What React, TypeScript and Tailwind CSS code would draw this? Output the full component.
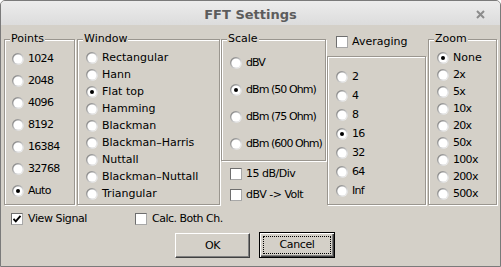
import { useId } from 'react';

const Radio: React.FC<{ checked?: boolean }> = ({ checked }) => {
  const id = useId();
  return (
    <svg width="12" height="12" viewBox="0 0 12 12" className="shrink-0">
      <defs>
        <linearGradient id={id} x1="0" y1="0" x2="1" y2="1">
          <stop offset="0" stopColor="#6f6f6f" />
          <stop offset="0.55" stopColor="#c8c8c8" />
          <stop offset="1" stopColor="#ffffff" />
        </linearGradient>
      </defs>
      <circle cx="6" cy="6" r="6" fill={`url(#${id})`} />
      <circle cx="6" cy="6" r="4.6" fill="#ffffff" />
      {checked && <circle cx="6" cy="6" r="2" fill="#000000" />}
    </svg>
  );
};

const Check: React.FC<{ checked?: boolean }> = ({ checked }) => (
  <span className="w-[12px] h-[12px] shrink-0 bg-white border border-[#6e6e6e] border-r-[#a8a8a8] border-b-[#a8a8a8] flex items-center justify-center">
    {checked && (
      <svg width="10" height="10" viewBox="0 0 10 10">
        <path d="M1.5 4.8 L3.8 7.3 L8.5 1.8" fill="none" stroke="#000" strokeWidth="1.9" />
      </svg>
    )}
  </span>
);

const Group: React.FC<{ label?: string; className: string; children: React.ReactNode }> = ({ label, className, children }) => (
  <div className={`relative border border-[#9a968f] shadow-[inset_1px_1px_0_#ffffff,1px_1px_0_#ffffff] ${className}`}>
    {label && (
      <span className="absolute -top-[8px] left-[5px] px-[1px] leading-[14px] bg-[#d4d0c8]">{label}</span>
    )}
    {children}
  </div>
);

const Option: React.FC<{ text: string; checked?: boolean; h: string; tight?: string }> = ({ text, checked, h, tight = '' }) => (
  <div className={`flex items-center gap-[4px] ${h}`}>
    <Radio checked={checked} />
    <span className={`whitespace-nowrap ${tight}`}>{text}</span>
  </div>
);

export default function App() {
  return (
    <div className="w-[501px] h-[267px] bg-[#d4d0c8] border border-[#7a7a7a] rounded-t-[5px] overflow-hidden flex flex-col font-['DejaVu_Sans',sans-serif] text-[11px] leading-[14px] text-black">
      {/* title bar */}
      <div className="relative h-[24px] shrink-0 bg-gradient-to-b from-[#ececec] to-[#dcdcdc] flex items-center justify-center">
        <span className="font-bold text-[13px] text-[#5c5c5c] pt-[3px]">FFT Settings</span>
        <svg width="9" height="9" viewBox="0 0 9 9" className="absolute right-[15px] top-[9px]">
          <path d="M1 1 L8 8 M8 1 L1 8" stroke="#8c8c8c" strokeWidth="2" />
        </svg>
      </div>

      <div className="flex pl-[3px]">
        <Group label="Points" className="mt-[14px] w-[71px] h-[166px] pt-[8px] pl-[7px]">
          {['1024', '2048', '4096', '8192', '16384', '32768', 'Auto'].map((p) => (
            <Option key={p} text={p} checked={p === 'Auto'} h="h-[22px]" tight="tracking-[-0.7px]" />
          ))}
        </Group>

        <Group label="Window" className="ml-[2px] mt-[14px] w-[143px] h-[166px] pt-[9px] pl-[8px]">
          {[
            'Rectangular',
            'Hann',
            'Flat top',
            'Hamming',
            'Blackman',
            'Blackman–Harris',
            'Nuttall',
            'Blackman–Nuttall',
            'Triangular',
          ].map((w) => (
            <Option key={w} text={w} checked={w === 'Flat top'} h="h-[17px]" />
          ))}
        </Group>

        <div className="ml-[1px] w-[105px] flex flex-col">
          <Group label="Scale" className="mt-[14px] h-[122px] pt-[9px] pl-[8px]">
            {['dBV', 'dBm (50 Ohm)', 'dBm (75 Ohm)', 'dBm (600 Ohm)'].map((s) => (
              <Option key={s} text={s} checked={s === 'dBm (50 Ohm)'} h="h-[27px]" tight="tracking-[-0.95px]" />
            ))}
          </Group>
          <div className="mt-[2px] h-[21px] flex items-center gap-[4px] pl-[9px]">
            <Check />
            <span className="tracking-[-0.5px]">15 dB/Div</span>
          </div>
          <div className="h-[21px] flex items-center gap-[4px] pl-[9px]">
            <Check />
            <span className="tracking-[-0.5px]">dBV -&gt; Volt</span>
          </div>
        </div>

        <div className="ml-[1px] w-[99px] flex flex-col">
          <div className="mt-[10px] h-[14px] flex items-center gap-[4px] pl-[9px]">
            <Check />
            <span>Averaging</span>
          </div>
          <Group className="mt-[7px] h-[149px] pt-[10px] pl-[8px]">
            {['2', '4', '8', '16', '32', '64', 'Inf'].map((a) => (
              <Option key={a} text={a} checked={a === '16'} h="h-[19px]" tight="tracking-[-0.7px]" />
            ))}
          </Group>
        </div>

        <Group label="Zoom" className="ml-[2px] mt-[14px] w-[69px] h-[166px] pt-[9px] pl-[8px]">
          {['None', '2x', '5x', '10x', '20x', '50x', '100x', '200x', '500x'].map((z) => (
            <Option key={z} text={z} checked={z === 'None'} h="h-[17px]" tight={z === 'None' ? '' : 'tracking-[-0.7px]'} />
          ))}
        </Group>
      </div>

      <div className="mt-[7px] h-[14px] flex items-center">
        <div className="ml-[10px] w-[124px] flex items-center gap-[5px]">
          <Check checked />
          <span className="tracking-[-0.4px]">View Signal</span>
        </div>
        <div className="flex items-center gap-[5px]">
          <Check />
          <span className="tracking-[-0.5px]">Calc. Both Ch.</span>
        </div>
      </div>

      <div className="mt-[7px] flex gap-[9px] ml-[174px]">
        <button className="w-[75px] h-[25px] bg-[#d4d0c8] border border-t-white border-l-white border-r-[#404040] border-b-[#404040] shadow-[inset_-1px_-1px_0_#808080] flex items-center justify-center tracking-[-0.4px]">
          OK
        </button>
        <button className="w-[76px] h-[26px] -mt-[1px] bg-[#d4d0c8] border border-black shadow-[inset_1px_1px_0_#ffffff,inset_-1px_-1px_0_#404040,inset_-2px_-2px_0_#808080] p-[3px] flex">
          <span className="flex-1 border border-dotted border-black flex items-center justify-center tracking-[-0.4px]">Cancel</span>
        </button>
      </div>
    </div>
  );
}
